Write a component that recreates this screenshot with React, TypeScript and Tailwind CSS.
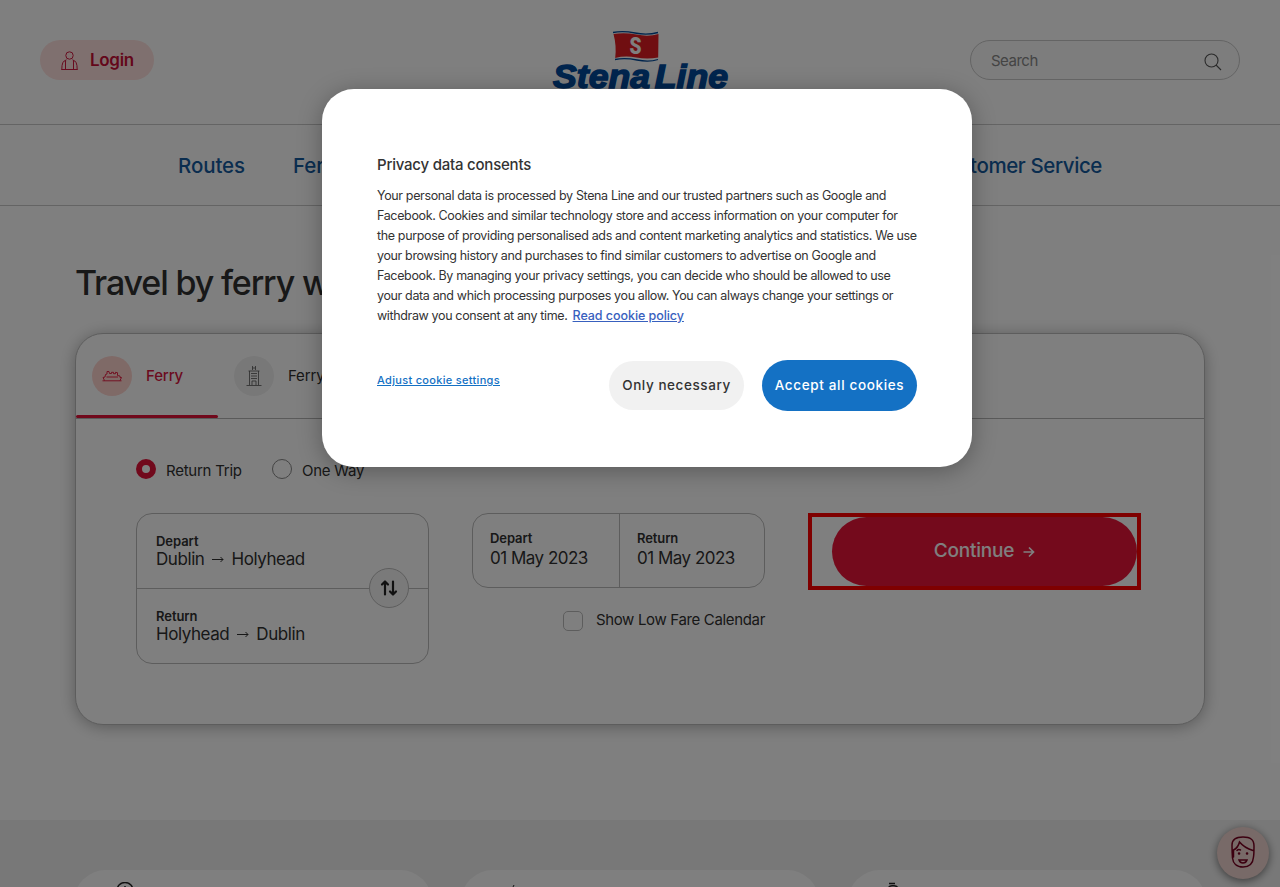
import React from 'react';

const swapArrow = (
  <svg className="h-[18px] w-[18px]" viewBox="0 0 18 18" fill="none" stroke="#222" strokeWidth="2.2" strokeLinecap="round" strokeLinejoin="round">
    <path d="M5 15.5V3M2 5.5 5 2.5l3 3M13 2.5V15M10 12.5l3 3 3-3" />
  </svg>
);

function Logo() {
  return (
    <svg className="h-[70px] w-[180px]" viewBox="550 25 180 70">
      <path d="M613 32.500q10-2 22 .5t23-.5M615 59.500q10-2 22 .5t21-.5" fill="none" stroke="#004899" strokeWidth="1.300" />
      <path d="M613.500 34q11-2 23 .6t22-.6l-.3 23.500q-11 2-22 0t-21 .4q1.500-12-1.700-23.900z" fill="#e01c22" />
      <text x="629.500" y="53.500" fontFamily="Roboto, sans-serif" fontSize="23" fontWeight="900" fill="#fff" textLength="12" lengthAdjust="spacingAndGlyphs">S</text>
      <text x="553" y="88" fontFamily="Liberation Sans, sans-serif" fontSize="34" fontWeight="700" fontStyle="italic" fill="#004a9c" stroke="#004a9c" strokeWidth="1.500" textLength="175" lengthAdjust="spacingAndGlyphs">Stena<tspan dx="-5"> Line</tspan></text>
    </svg>
  );
}

function Header() {
  return (
    <header className="flex h-[125px] items-start justify-between border-b border-[#c8c8c8] px-10">
      <div className="mt-10 flex w-[270px]">
        <button className="flex h-10 items-center rounded-full bg-[#ffe1de] pl-[21px] pr-5 text-[17px] font-semibold tracking-[-0.3px] text-[#c80f37]">
          <svg className="mt-[1px] mr-3 h-5 w-[17px]" viewBox="0 0 17 20" fill="none" stroke="#d01840" strokeWidth="1">
            <circle cx="8.500" cy="4.500" r="3.700" />
            <path d="M.8 18.500Q.8 9.500 4.800 9.500M16.200 18.500Q16.200 9.500 12.200 9.500M5.200 8.500Q4.500 9 4.500 11v7.500M11.800 8.500q.7.500.7 2.500v7.500M.3 18.500h16.400" />
          </svg>
          <span className="mt-[2px]">Login</span>
        </button>
      </div>
      <div className="mt-[25px]"><Logo /></div>
      <div className="mt-10 flex h-10 w-[270px] items-center justify-between rounded-full border border-[#c8c8c8] bg-[#fafafa] pl-5 pr-[17px] text-[15px] text-[#888]">
        <span className="mt-[2px] tracking-[-0.5px]">Search</span>
        <svg className="mt-[3px] h-[18px] w-[18px]" viewBox="0 0 18 18" fill="none" stroke="#555" strokeWidth="1.1">
          <circle cx="7.500" cy="7.500" r="6.500" />
          <path d="m12 12 5 5" />
        </svg>
      </div>
    </header>
  );
}

function RouteRow({ label, from, to }: { label: string; from: string; to: string }) {
  return (
    <div className="flex flex-1 flex-col justify-center pb-[1px] pl-[19px]">
      <b className="text-[13px] leading-4 font-semibold tracking-[-0.05px]">{label}</b>
      <span className="flex items-center text-[17px] leading-5 tracking-[-0.43px]">
        {from}
        <svg className="mt-[1px] mr-[7px] ml-[8px] h-[7px] w-[12px]" viewBox="0 0 12 7" fill="none" stroke="#303030" strokeWidth="1"><path d="M0 3.500h11M8.500 1l2.500 2.500L8.500 6" /></svg>
        {to}
      </span>
    </div>
  );
}

function DateCell({ label }: { label: string }) {
  return (
    <div className="flex flex-col pt-4 pl-[17px]">
      <b className="text-[13px] leading-4 font-semibold tracking-[-0.1px]">{label}</b>
      <span className="mt-[1px] text-[17px] leading-[22px] tracking-[-0.5px]">01 May 2023</span>
    </div>
  );
}

function Booking() {
  return (
    <section className="mx-[75px] mt-[27px] h-[392px] rounded-[28px] border border-[#bbb] bg-white shadow-[0_2px_16px_rgba(0,0,0,0.3)]">
      <div className="flex h-[85px] border-b border-[#b5b5b5] text-[15px] tracking-[-0.15px]">
        <div className="relative flex w-[142px] items-center pl-4 font-medium text-[#d91640]">
          <span className="mr-[14px] flex h-10 w-10 items-center justify-center rounded-full bg-[#ffd4cf]">
            <svg className="h-[12px] w-5" viewBox="0 0 20 12" fill="none" stroke="#e31239" strokeWidth=".9">
              <path d="M2.500 10.500 1 7.500l2-.5.5-2.500L5 4V1.500h2l.5 2h2V2.300h2v1.400h2V2.300l2 .4v2.800l2.500.5v1.500h1.500l-1.500 3M.5 10.800h19M4.500 7H16" />
            </svg>
          </span>
          Ferry
          <i className="absolute inset-x-0 bottom-0 h-[3px] rounded-sm bg-[#e31239]" />
        </div>
        <div className="flex items-center pl-4">
          <span className="mr-[14px] flex h-10 w-10 items-center justify-center rounded-full bg-[#f1f1f1]">
            <svg className="h-[22px] w-4" viewBox="0 0 16 22" fill="none" stroke="#555" strokeWidth=".8">
              <path d="M6.500 1v4M9.500 1v4M6.500 3h3M2.500 6h11M3.500 6v14M12.500 6v14M.5 20.500h15M5 8.500h6M5 11h6M5 13.500h6M6 20v-4h4v4" />
            </svg>
          </span>
          Ferry + Hotel
        </div>
      </div>
      <div className="px-[60px] pt-10">
        <div className="flex h-[22px] items-start text-[15px] leading-[23px] tracking-[-0.25px]">
          <span className="mr-[10px] h-5 w-5 rounded-full border-[6px] border-[#e31239]" />
          <span className="w-[76px] whitespace-nowrap">Return Trip</span>
          <span className="mr-[10px] ml-[30px] h-5 w-5 rounded-full border border-[#888]" />
          <span>One Way</span>
        </div>
        <div className="mt-8 flex items-start">
          <div className="relative flex h-[151px] w-[293px] flex-col rounded-2xl border border-[#bbb]">
            <RouteRow label="Depart" from="Dublin" to="Holyhead" />
            <div className="border-t border-[#bbb]" />
            <RouteRow label="Return" from="Holyhead" to="Dublin" />
            <div className="absolute top-[54px] right-[19px] flex h-10 w-10 items-center justify-center rounded-full border border-[#bbb] bg-[#f5f5f5]">{swapArrow}</div>
          </div>
          <div className="ml-[43px] w-[293px]">
            <div className="grid h-[75px] grid-cols-[147px_1fr] rounded-2xl border border-[#bbb]">
              <div className="border-r border-[#bbb]"><DateCell label="Depart" /></div>
              <DateCell label="Return" />
            </div>
            <div className="mt-[21px] flex items-center justify-end text-[15px] tracking-[-0.34px] whitespace-nowrap">
              <span className="mt-[2px] mr-[13px] h-5 w-5 rounded-[5px] border border-[#bbb]" />
              Show Low Fare Calendar
            </div>
          </div>
          <div className="ml-[43px] flex h-[77px] w-[333px] justify-end border-4 border-[#f00]">
            <button className="flex h-[69px] w-[305px] items-center justify-center rounded-full bg-[#e81438] text-[19px] font-medium tracking-[-0.2px] text-white">
              Continue
              <svg className="mt-[1px] ml-[9px] h-3 w-3" viewBox="0 0 12 12" fill="none" stroke="#fff" strokeWidth="1.700"><path d="M.5 6h10M6 1.500 10.500 6 6 10.500" /></svg>
            </button>
          </div>
        </div>
      </div>
    </section>
  );
}

function Teasers() {
  return (
    <section className="mt-[95px] flex h-[67px] gap-[29px] bg-[#f1f1f1] px-[74px] pt-[50px]">
      {[0, 1, 2].map((i) => (
        <div key={i} className="h-20 flex-1 rounded-[32px] bg-white pt-3 pl-10">
          <svg className="h-5 w-6" viewBox="0 0 24 20" fill="none" stroke="#222" strokeWidth="1.500">
            {i === 0 && <path d="M3 8.500a8 8 0 0 1 16 0M11 4v6" />}
            {i === 1 && <path d="m12 5 1-2" strokeWidth="1" />}
            {i === 2 && <path d="M1 1.500h6M.3 6q1-2.300 3.700-2.300h2q2.700 0 4 2.300" />}
          </svg>
        </div>
      ))}
    </section>
  );
}

function Avatar() {
  return (
    <div className="absolute top-[827px] left-[1217px] flex h-[52px] w-[52px] items-center justify-center rounded-full bg-[#f0d5d0] pb-[2px] shadow-[0_2px_8px_rgba(0,0,0,0.5)]">
      <svg className="h-8 w-6" viewBox="0 0 24 32" fill="none" stroke="#780020" strokeWidth="1.500" strokeLinecap="round">
        <path d="M1.500 22C1 16 1 14 1 9 1 3 5 1 12 1s11 2 11 9c0 5 0 8-.5 11-.5 6-4 10-10.500 10S2 27 1.500 22zM2.500 21V14Q7 12 8.500 6q5 6 13.500 8.500M6 14.500q1.500-1.500 3.500-.5" />
        <path d="M8 24h8q-1 3-4 3t-4-3z" />
        <path d="M8 17.500h.1M16 17.500h.1" strokeWidth="2.500" />
      </svg>
    </div>
  );
}

function Consent() {
  return (
    <div className="absolute top-[89px] left-[322px] flex h-[378px] w-[650px] flex-col rounded-[32px] bg-white px-[55px] pt-[65px] text-[#333] shadow-[0_4px_24px_rgba(0,0,0,0.3)]">
      <h2 className="text-[15px] leading-[21px] font-medium tracking-[-0.22px]">Privacy data consents</h2>
      <p className="mt-[11px] text-[12.5px] leading-5 tracking-[-0.36px] whitespace-nowrap">
        Your personal data is processed by Stena Line and our trusted partners such as Google and<br />
        Facebook. Cookies and similar technology store and access information on your computer for<br />
        the purpose of providing personalised ads and content marketing analytics and statistics. We use<br />
        your browsing history and purchases to find similar customers to advertise on Google and<br />
        Facebook. By managing your privacy settings, you can decide who should be allowed to use<br />
        your data and which processing purposes you allow. You can always change your settings or<br />
        withdraw you consent at any time. <a className="ml-[2px] text-[12.5px] font-medium tracking-[-0.06px] text-[#3860be] underline">Read cookie policy</a>
      </p>
      <div className="mt-[34px] flex items-center">
        <a className="mb-[10px] text-[11px] font-medium tracking-[0.31px] text-[#1471c4] underline">Adjust cookie settings</a>
        <button className="ml-auto h-[49px] w-[135px] rounded-full bg-[#f1f1f1] text-[13.5px] font-medium tracking-[0.57px] whitespace-nowrap">Only necessary</button>
        <button className="ml-[18px] h-[51px] w-[155px] rounded-full bg-[#1471c4] text-[13.5px] font-medium tracking-[0.65px] whitespace-nowrap text-white">Accept all cookies</button>
      </div>
    </div>
  );
}

export default function App() {
  return (
    <div className="relative h-[887px] w-[1280px] overflow-hidden bg-white font-['Inter',sans-serif] text-[#303030]">
      <Header />
      <nav className="flex h-[81px] items-center justify-between border-b border-[#c8c8c8] px-[178px] pt-[2px] text-[20.5px] font-medium tracking-[-0.1px] text-[#145a9e]">
        <div className="flex gap-12"><span>Routes</span><span>Ferries</span></div>
        <span className="tracking-[-0.4px]">Customer Service</span>
      </nav>
      <h1 className="mt-[54px] ml-[75px] text-[34px] leading-[46px] font-medium tracking-[-1.15px] whitespace-nowrap">Travel by ferry with Stena Line</h1>
      <Booking />
      <Teasers />
      <Avatar />
      <div className="absolute inset-0 bg-black/50" />
      <Consent />
    </div>
  );
}
